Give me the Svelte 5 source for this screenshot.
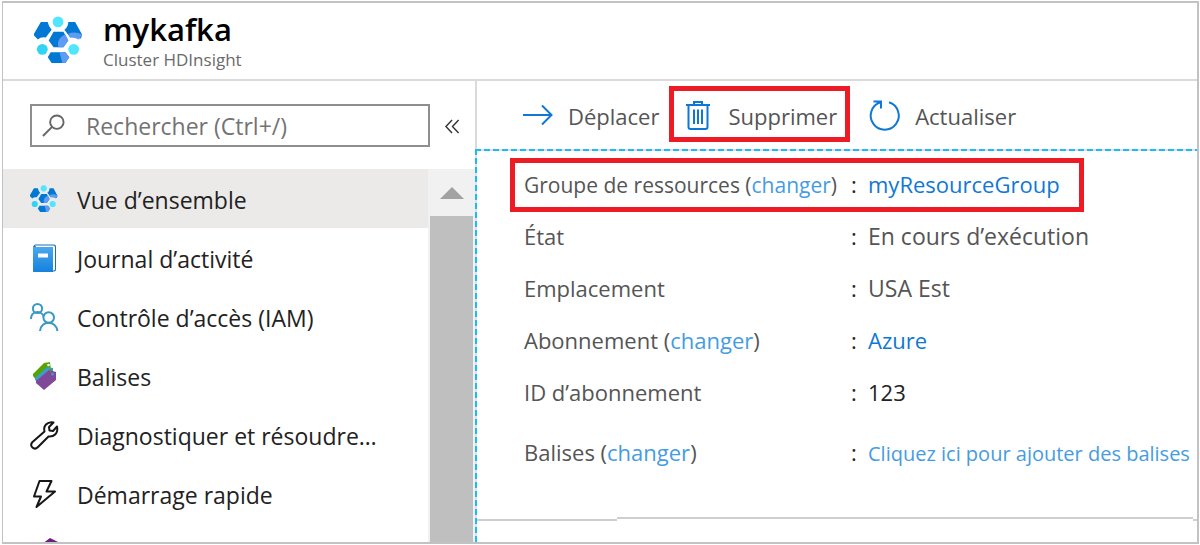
<script>
  const menu = [
    { icon: 'cluster', label: 'Vue d’ensemble', active: true },
    { icon: 'log', label: 'Journal d’activité' },
    { icon: 'access', label: 'Contrôle d’accès (IAM)' },
    { icon: 'tags', label: 'Balises' },
    { icon: 'wrench', label: 'Diagnostiquer et résoudre…' },
    { icon: 'bolt', label: 'Démarrage rapide' },
    { icon: 'gem', label: '' }
  ];

  const details = [
    { label: 'Groupe de ressources', change: true, value: 'myResourceGroup', kind: 'link', marked: true },
    { label: 'État', value: 'En cours d’exécution', kind: 'plain' },
    { label: 'Emplacement', value: 'USA Est', kind: 'plain' },
    { label: 'Abonnement', change: true, value: 'Azure', kind: 'link' },
    { label: 'ID d’abonnement', value: '123', kind: 'dark' },
    { label: 'Balises', change: true, value: 'Cliquez ici pour ajouter des balises', kind: 'soft', last: true }
  ];
</script>

{#snippet cluster()}
  <svg class="fill" viewBox="0 0 50 50" aria-hidden="true">
    <path fill="#0078d4" d="M7 6h7q1 5 4 8l-6 8q-5-1-8 2L0 20v-2z" />
    <path fill="#0078d4" d="M35 6h7l7 13-1 4q-8-3-11-1l-6-8q4-3 4-8z" />
    <path fill="#5e9bf2" d="M35 18q7-3 14 1l-3 5q-4-2-9-2z" />
    <path fill="#0078d4" d="M20 16h10l5 9-5 7H20l-5-7z" />
    <path fill="#5e9bf2" d="M32 19l3 6-5 7h-5c-2-5 1-11 7-13z" />
    <path fill="#0078d4" d="M17 37h15l4 5-4 6H18l-4-6z" />
    <path fill="#5e9bf2" d="M26 37h6l4 5-4 6h-3z" />
    <circle cx="24.500" cy="6" r="5.500" fill="#50e6ff" />
    <circle cx="8.500" cy="34" r="5.500" fill="#32d4f5" />
    <circle cx="40.500" cy="34" r="5.500" fill="#50e6ff" />
  </svg>
{/snippet}

{#snippet glyph(name)}
  {#if name === 'cluster'}
    {@render cluster()}
  {:else if name === 'log'}
    <svg class="fill" viewBox="0 0 28 28" aria-hidden="true">
      <defs>
        <linearGradient id="book" x1="0" y1="0" x2="0" y2="1">
          <stop offset="0" stop-color="#4aa8ee" />
          <stop offset="1" stop-color="#1481dc" />
        </linearGradient>
      </defs>
      <path fill="#1b6fae" d="M5 .5h19q2 0 2 2v23q0 2-2 2H4q-1 0-1-1v-24z" />
      <path fill="#fff" d="M5 1.500h19l1 1v23l-1 1h-1z" />
      <path fill="url(#book)" d="M3 3h20v25H4q-1 0-1-1z" />
      <path fill="#fff" d="M8 9.500h10v4H8z" />
    </svg>
  {:else if name === 'access'}
    <svg class="line access" viewBox="0 0 28 28" aria-hidden="true">
      <circle cx="7.500" cy="5.500" r="4.600" />
      <circle cx="18.700" cy="14.500" r="5.300" />
      <path d="M1 16C1 7 12 7.500 13.500 13.500M10 28c1-11 16-11 17.500 0" />
    </svg>
  {:else if name === 'tags'}
    <svg class="fill" viewBox="0 0 28 28" aria-hidden="true">
      <path fill="#57a300" d="M3 12L14 1l6-1 1 9L8 20 3 14z" />
      <path fill="#3f9cc8" d="M5 16L17 5l6 1v8L12 24 5 18z" />
      <path fill="#804998" d="M6 19L19 8l7 2v8L14 28 6 21z" />
      <circle cx="18.500" cy="3" r="1.300" fill="#fff" />
      <circle cx="20.500" cy="8" r="1.200" fill="#57a300" />
      <circle cx="22.500" cy="12" r="1.500" fill="#3f9cc8" />
    </svg>
  {:else if name === 'wrench'}
    <svg class="line" viewBox="0 0 28 28" aria-hidden="true">
      <path d="M14.500 10.500C13 5 17 .5 23.500 1.500L19 6l.5 3.500 3.500.5 4-4.500c1.500 7-3 10.500-8.500 10L8 26c-4 4-9-1-5.500-5z" />
    </svg>
  {:else if name === 'bolt'}
    <svg class="line" viewBox="0 0 28 28" aria-hidden="true">
      <path d="M9.500 1h12l-5 10.500H25L6.500 27l4.500-10.500H4z" />
    </svg>
  {:else}
    <svg class="fill" viewBox="0 0 28 28" aria-hidden="true">
      <path fill="#68217a" d="M20-1l8 4v20l-8 5-8-4V5z" />
    </svg>
  {/if}
{/snippet}

<div class="page">
  <header>
    <span class="logo">{@render cluster()}</span>
    <div>
      <h1>mykafka</h1>
      <p>Cluster HDInsight</p>
    </div>
  </header>

  <div class="body">
    <aside>
      <div class="search-row">
        <label class="search">
          <svg viewBox="0 0 24 24" aria-hidden="true"><circle cx="15.500" cy="8.500" r="7" /><path d="M10.500 13.500L1 23" /></svg>
          <input type="search" placeholder="Rechercher (Ctrl+/)" aria-label="Rechercher" />
        </label>
        <button class="collapse" aria-label="Réduire le menu">
          <svg viewBox="0 0 16 16" aria-hidden="true"><path d="M7.500 1L1 8l6.500 7M14.500 1L8 8l6.500 7" /></svg>
        </button>
      </div>
      <div class="menu">
        <nav>
          {#each menu as item}
            <a href="#menu" class:active={item.active}>
              <span class="icon">{@render glyph(item.icon)}</span>
              {item.label}
            </a>
          {/each}
        </nav>
        <div class="scrollbar">
          <svg viewBox="0 0 24 12" aria-hidden="true"><path d="M0 12L12 0l12 12z" /></svg>
          <div class="thumb"></div>
        </div>
      </div>
    </aside>

    <main>
      <div class="toolbar">
        <button class="move">
          <svg viewBox="0 0 30 30" aria-hidden="true"><path d="M0 14h28M19 4.500L28.500 14 19 23.500" /></svg>
          Déplacer
        </button>
        <button class="marked">
          <svg viewBox="0 0 30 30" aria-hidden="true">
            <path d="M3 4h24M11 4V1h8v3M5.500 4v22q0 2 2 2h15q2 0 2-2V4M11 8.500V23M15 8.500V23M19 8.500V23" />
          </svg>
          Supprimer
        </button>
        <button class="refresh">
          <svg viewBox="0 0 30 30" aria-hidden="true">
            <path d="M19 1.300A14 14 0 1 1 10.500 1.300M3.500 .5h7.500v7" />
          </svg>
          Actualiser
        </button>
      </div>

      <div class="essentials">
        <dl>
          {#each details as row}
            <div class="row" class:marked={row.marked} class:last={row.last}>
              <dt>{row.label}{#if row.change}&nbsp;(<a class="soft" href="#change">changer</a>){/if}</dt>
              <dd>
                <span class="colon">:</span>
                {#if row.kind === 'link' || row.kind === 'soft'}
                  <a class={row.kind} href="#value">{row.value}</a>
                {:else}
                  <span class={row.kind}>{row.value}</span>
                {/if}
              </dd>
            </div>
          {/each}
        </dl>
        <div class="rule"><span></span><span></span><span></span></div>
      </div>
    </main>
  </div>
</div>

<style>
  :global(body) {
    background: #fff;
  }

  .page {
    box-sizing: border-box;
    height: 100vh;
    padding: 1px 1px 1px 2px;
    display: flex;
    flex-direction: column;
    overflow: hidden;
    font-family: 'Open Sans', 'Noto Sans', sans-serif;
    font-size: 22px;
    line-height: 30px;
    color: #222;
    background: #fff;
  }

  header,
  .body {
    border: 0 solid #c0c2c3;
    border-width: 0 2px 0 1px;
  }

  header {
    display: flex;
    align-items: center;
    gap: 20px;
    height: 78px;
    padding-left: 31px;
    border-top-width: 2px;
    box-shadow: inset 0 -2px #dadada;
  }

  .logo {
    width: 49px;
    height: 49px;
    padding-bottom: 4px;
  }

  h1,
  p,
  dl,
  dd {
    margin: 0;
  }

  h1 {
    font-size: 31px;
    line-height: 36px;
    font-weight: 600;
    color: #000;
  }

  p {
    font-size: 17px;
    line-height: 26px;
    color: #6a6a6a;
  }

  svg {
    display: block;
    flex: none;
    overflow: visible;
    fill: none;
  }

  .fill,
  .line {
    width: 100%;
    height: 100%;
  }

  .line {
    stroke: #161616;
    stroke-width: 2;
    stroke-linejoin: round;
  }

  .access {
    stroke: #3999c6;
  }

  a {
    color: inherit;
    text-decoration: none;
  }

  button {
    font: inherit;
    color: inherit;
    background: none;
    border: 0;
    padding: 0;
  }

  .body {
    flex: 1;
    min-height: 0;
    display: grid;
    grid-template-columns: 472px 1fr;
    border-bottom-width: 2px;
  }

  aside {
    display: flex;
    flex-direction: column;
    min-height: 0;
    font-size: 23px;
  }

  .search-row {
    display: flex;
    align-items: center;
    gap: 15px;
    padding: 23px 15px 22px 27px;
  }

  .search {
    flex: 1;
    display: flex;
    align-items: center;
    gap: 21px;
    height: 39px;
    padding-left: 10px;
    border: 2px solid #8f8f8f;
  }

  .search svg {
    width: 23px;
    height: 23px;
    stroke: #666;
    stroke-width: 2;
  }

  input {
    flex: 1;
    min-width: 0;
    font: inherit;
    color: #333;
    background: none;
    border: 0;
    padding: 0;
    outline: 0;
  }

  input::placeholder {
    color: #737373;
    opacity: 1;
  }

  .collapse {
    padding-top: 2px;
  }

  .collapse svg {
    width: 15px;
    height: 15px;
    stroke: #333;
    stroke-width: 1.500;
  }

  .menu {
    flex: 1;
    min-height: 0;
    display: flex;
    overflow: hidden;
  }

  nav {
    flex: 1;
  }

  nav a {
    display: flex;
    align-items: center;
    gap: 19px;
    height: 59px;
    padding: 3px 0 0 27px;
    box-sizing: border-box;
    white-space: nowrap;
  }

  .active {
    background: #ebeae9;
  }

  .icon {
    width: 28px;
    height: 28px;
    padding-bottom: 2px;
  }

  .scrollbar {
    width: 43px;
    display: flex;
    flex-direction: column;
    align-items: center;
    padding: 0 2px;
    background: #f1f1f1;
  }

  .scrollbar svg {
    width: 24px;
    height: 12px;
    margin: 18px 0 17px;
    fill: #a2a2a2;
  }

  .thumb {
    flex: 1;
    width: 100%;
    background: #bfbfbf;
  }

  main {
    display: flex;
    flex-direction: column;
    min-width: 0;
    color: #555;
  }

  .toolbar {
    display: flex;
    height: 68px;
    box-sizing: border-box;
    align-items: center;
    padding: 0 0 2px 46px;
    border-left: 2px solid #dadada;
  }

  .toolbar button {
    display: flex;
    align-items: center;
    gap: 15px;
  }

  .toolbar svg {
    width: 30px;
    height: 30px;
    stroke: #0f78d4;
    stroke-width: 2;
  }

  .marked {
    border: 5px solid #ed1c24;
  }

  .toolbar .marked {
    height: 56px;
    box-sizing: border-box;
    margin: 0 20px 0 10px;
    padding: 3px 8px 0 9px;
  }

  .toolbar .refresh,
  .toolbar .move {
    padding-top: 3px;
  }

  .essentials {
    flex: 1;
    display: flex;
    flex-direction: column;
    --cyan: #1cbcf2;
    border-left: 2px solid transparent;
    background:
      repeating-linear-gradient(to right, var(--cyan) 0 6px, #e2e2e2 6px 9px) 0 0 / 100% 2px no-repeat border-box,
      repeating-linear-gradient(to bottom, var(--cyan) 0 6px, #e2e2e2 6px 9px) 0 0 / 2px 100% no-repeat border-box;
  }

  dl {
    flex: 1;
    padding: 9px 0 0 33px;
  }

  .row {
    display: grid;
    grid-template-columns: 327px 1fr;
    align-items: baseline;
    align-content: center;
    height: 52px;
    box-sizing: border-box;
    padding-left: 14px;
    white-space: nowrap;
  }

  .row.marked {
    width: 574px;
    height: 54px;
    margin-bottom: -2px;
    padding: 0 0 2px 9px;
  }

  .marked dt {
    font-size: 21px;
  }

  .last {
    margin-top: 9px;
  }

  dd {
    display: flex;
    align-items: baseline;
  }

  .colon {
    width: 17px;
    color: #222;
  }

  .link {
    color: #0f78d4;
  }

  .plain {
    font-size: 23px;
  }

  .soft {
    color: #459ce2;
  }

  dd .soft {
    font-size: 20px;
  }

  .dark {
    color: #222;
  }

  .rule {
    display: flex;
    height: 25px;
  }

  .rule span {
    border-top: 2px solid #cfcfcf;
    margin-top: 2px;
    width: 140px;
  }

  .rule span:nth-child(2) {
    flex: 1;
    margin-top: 0;
  }

  .rule span:last-child {
    width: 4px;
  }
</style>
